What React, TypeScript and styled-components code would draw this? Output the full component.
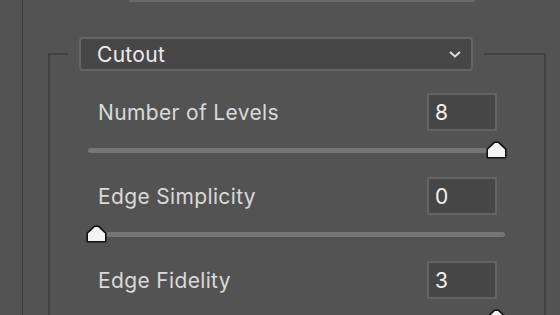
import styled, { createGlobalStyle } from "styled-components";

const GlobalStyle = createGlobalStyle`
  html, body {
    margin: 0;
    padding: 0;
    background: #535353;
    overflow: hidden;
  }
  body {
    font-family: Inter, "Liberation Sans", sans-serif;
  }
`;

const Page = styled.div`
  width: 560px;
  height: 315px;
  background: #535353;
  overflow: hidden;
`;

const Panel = styled.div`
  margin-left: 22px;
  height: 315px;
  border-left: 1px solid #3b3b3b;
  padding-left: 25px;
  box-sizing: border-box;
`;

const TopField = styled.div`
  margin-left: 81px;
  width: 342px;
  height: 0;
  border: 2px solid #6a6a6a;
  border-top: none;
  border-radius: 0 0 5px 5px;
  box-sizing: content-box;
`;

const Group = styled.fieldset`
  margin: 35px 0 0 0;
  width: 498px;
  box-sizing: border-box;
  border: 2px solid #414141;
  border-radius: 0;
  padding: 0 0 40px 0;
  min-width: 0;
`;

const Legend = styled.legend`
  margin-left: 18px;
  padding: 0 11px;
`;

const Dropdown = styled.div`
  width: 394px;
  height: 34px;
  box-sizing: border-box;
  display: flex;
  align-items: center;
  justify-content: space-between;
  padding: 0 9px 0 16px;
  background: #474747;
  border: 2px solid #656565;
  border-radius: 4px;
  color: #ececec;
  font-size: 21px;
  letter-spacing: 0.3px;
`;

const Content = styled.div`
  padding: 22px 39px 0 38px;
  display: flex;
  flex-direction: column;
`;

const Setting = styled.div`
  display: flex;
  flex-direction: column;
  margin-bottom: 24px;
`;

const Row = styled.div`
  display: flex;
  align-items: center;
  justify-content: space-between;
  padding: 0 8px 0 10px;
`;

const Label = styled.span`
  color: #dadada;
  font-size: 21px;
  letter-spacing: 0.35px;
`;

const NumberBox = styled.div`
  width: 70px;
  height: 38px;
  box-sizing: border-box;
  display: flex;
  align-items: center;
  padding-left: 6px;
  background: #464646;
  border: 2px solid #646464;
  color: #f0f0f0;
  font-size: 21px;
`;

const Track = styled.div`
  position: relative;
  margin-top: 17px;
  height: 5px;
  width: 417px;
  border-radius: 3px;
  background: #767676;
`;

const Thumb = styled.svg`
  position: absolute;
  top: -7px;
  width: 21px;
  height: 18px;
`;

function Chevron() {
  return (
    <svg width="14" height="10" viewBox="0 0 14 10">
      <path d="M2 3 L7 7.5 L12 3" fill="none" stroke="#e0e0e0" strokeWidth="2" />
    </svg>
  );
}

function Slider({ value, min, max }: { value: number; min: number; max: number }) {
  const pct = (value - min) / (max - min);
  return (
    <Track>
      <Thumb viewBox="0 0 21 18" style={{ left: pct * 400 - 2 }}>
        <polygon
          points="1.2,8.2 8.7,1.2 12.3,1.2 19.8,8.2 19.8,16.8 1.2,16.8"
          fill="#f4f4f4"
          stroke="#111"
          strokeWidth="1.6"
          strokeLinejoin="round"
        />
      </Thumb>
    </Track>
  );
}

const settings = [
  { label: "Number of Levels", value: 8, min: 2, max: 8 },
  { label: "Edge Simplicity", value: 0, min: 0, max: 10 },
  { label: "Edge Fidelity", value: 3, min: 1, max: 3 },
];

export default function App() {
  return (
    <Page>
      <GlobalStyle />
      <Panel>
        <TopField />
        <Group>
          <Legend>
            <Dropdown>
              <span>Cutout</span>
              <Chevron />
            </Dropdown>
          </Legend>
          <Content>
            {settings.map((s) => (
              <Setting key={s.label}>
                <Row>
                  <Label>{s.label}</Label>
                  <NumberBox>{s.value}</NumberBox>
                </Row>
                <Slider value={s.value} min={s.min} max={s.max} />
              </Setting>
            ))}
          </Content>
        </Group>
      </Panel>
    </Page>
  );
}
